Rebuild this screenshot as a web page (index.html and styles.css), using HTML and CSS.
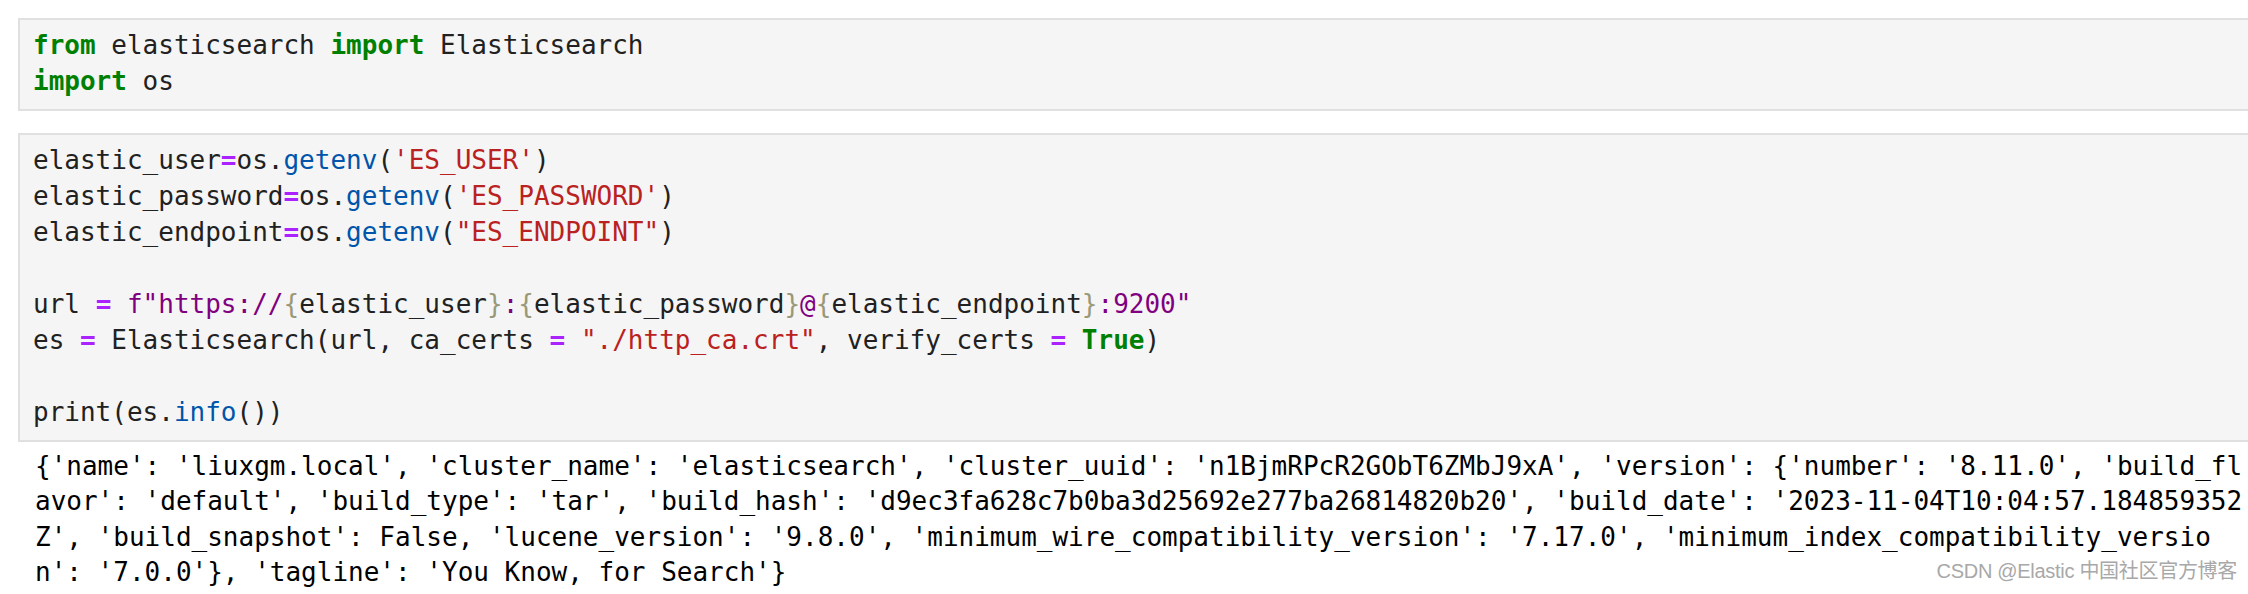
FILE: index.html
```html
<!DOCTYPE html>
<html lang="en">
<head>
<meta charset="utf-8">
<title>Notebook</title>
<link rel="stylesheet" href="styles.css">
</head>
<body>
<main class="notebook">
  <section class="cell">
    <div class="input">
      <div class="line"><span class="kw">from</span> elasticsearch <span class="kw">import</span> Elasticsearch</div>
      <div class="line"><span class="kw">import</span> os</div>
    </div>
  </section>
  <section class="cell">
    <div class="input">
      <div class="line">elastic_user<span class="op">=</span>os.<span class="fn">getenv</span>(<span class="str">'ES_USER'</span>)</div>
      <div class="line">elastic_password<span class="op">=</span>os.<span class="fn">getenv</span>(<span class="str">'ES_PASSWORD'</span>)</div>
      <div class="line">elastic_endpoint<span class="op">=</span>os.<span class="fn">getenv</span>(<span class="str">"ES_ENDPOINT"</span>)</div>
      <div class="line empty"></div>
      <div class="line">url <span class="op">=</span> <span class="fs">f"https://</span><span class="br">{</span>elastic_user<span class="br">}</span><span class="fs">:</span><span class="br">{</span>elastic_password<span class="br">}</span><span class="fs">@</span><span class="br">{</span>elastic_endpoint<span class="br">}</span><span class="fs">:9200"</span></div>
      <div class="line">es <span class="op">=</span> Elasticsearch(url, ca_certs <span class="op">=</span> <span class="str">"./http_ca.crt"</span>, verify_certs <span class="op">=</span> <span class="kw">True</span>)</div>
      <div class="line empty"></div>
      <div class="line">print(es.<span class="fn">info</span>())</div>
    </div>
    <div class="output">
      <div class="line">{'name': 'liuxgm.local', 'cluster_name': 'elasticsearch', 'cluster_uuid': 'n1BjmRPcR2GObT6ZMbJ9xA', 'version': {'number': '8.11.0', 'build_fl</div>
      <div class="line">avor': 'default', 'build_type': 'tar', 'build_hash': 'd9ec3fa628c7b0ba3d25692e277ba26814820b20', 'build_date': '2023-11-04T10:04:57.184859352</div>
      <div class="line">Z', 'build_snapshot': False, 'lucene_version': '9.8.0', 'minimum_wire_compatibility_version': '7.17.0', 'minimum_index_compatibility_versio</div>
      <div class="line">n': '7.0.0'}, 'tagline': 'You Know, for Search'}</div>
    </div>
  </section>
</main>
<div class="watermark">CSDN @Elastic 中国社区官方博客</div>
</body>
</html>
```
FILE: styles.css
```css
html, body {
  margin: 0;
  padding: 0;
  background: #ffffff;
  overflow: hidden;
}

.notebook {
  display: flex;
  flex-direction: column;
  gap: 22px;
  padding-top: 18px;
}

.cell {
  display: flex;
  flex-direction: column;
}

.input,
.output {
  font-family: "DejaVu Sans Mono", monospace;
  font-size: 26px;
  color: #212121;
}

.line {
  white-space: pre;
}

.input {
  margin-left: 18px;
  margin-right: -20px;
  background: #f5f5f5;
  border: 2px solid #e0e0e0;
  padding: 7px 0 10px 13px;
}

.input .line {
  height: 36px;
  line-height: 36px;
}

.output {
  margin-top: 7px;
  padding-left: 35px;
  color: #000000;
}

.output .line {
  height: 35.3px;
  line-height: 35.3px;
}

.kw { color: #008000; font-weight: bold; }
.op { color: #aa22ff; font-weight: bold; }
.fn { color: #0055aa; }
.str { color: #ba2121; }
.fs { color: #80007f; }
.br { color: #999977; }

.watermark {
  position: absolute;
  right: 11px;
  bottom: 10px;
  font-family: "Liberation Sans", "Noto Sans CJK SC", sans-serif;
  font-size: 20px;
  color: #a8a8a8;
  letter-spacing: -0.3px;
}
```
